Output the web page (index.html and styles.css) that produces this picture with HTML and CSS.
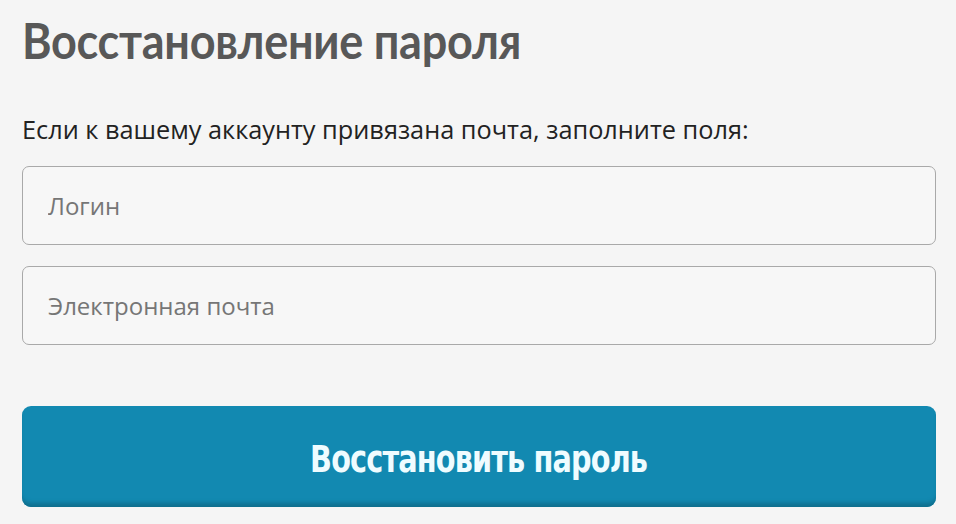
FILE: index.html
```html
<!DOCTYPE html>
<html lang="ru">
<head>
<meta charset="utf-8">
<title>Восстановление пароля</title>
<link rel="stylesheet" href="styles.css">
</head>
<body>
<main class="recover">
  <h1 class="recover__title"><span class="recover__title-text">Восстановление пароля</span></h1>
  <p class="recover__hint">Если к вашему аккаунту привязана почта, заполните поля:</p>
  <form class="recover__form">
    <input class="recover__input" type="text" placeholder="Логин">
    <input class="recover__input" type="email" placeholder="Электронная почта">
    <button class="recover__button" type="button"><span class="recover__button-text">Восстановить пароль</span></button>
  </form>
</main>
</body>
</html>
```
FILE: styles.css
```css
html, body {
  margin: 0;
  padding: 0;
  background: #f5f5f5;
}
.recover {
  width: 914px;
  padding: 0 0 0 22px;
  font-family: "Open Sans", "Noto Sans", sans-serif;
}
.recover__title {
  margin: 0;
  padding-top: 10px;
  font-family: "Lato", "Open Sans", sans-serif;
  font-size: 50px;
  line-height: 60px;
  font-weight: 700;
  color: #585858;
  letter-spacing: -0.3px;
}
.recover__title-text {
  display: inline-block;
  transform: scaleX(0.9);
  transform-origin: left center;
}
.recover__hint {
  margin: 41px 0 0;
  font-size: 25.3px;
  line-height: 36px;
  color: #222;
}
.recover__form {
  display: flex;
  flex-direction: column;
  margin-top: 19px;
}
.recover__input {
  box-sizing: border-box;
  height: 79px;
  width: 914px;
  margin: 0 0 21px;
  padding: 0 25px;
  border: 1.5px solid #a9a9a9;
  border-radius: 7px;
  background: #f7f7f7;
  font-family: "Open Sans", "Noto Sans", sans-serif;
  font-size: 24px;
  color: #444;
  outline: none;
}
.recover__input::placeholder {
  color: #767676;
}
.recover__button {
  box-sizing: border-box;
  height: 101px;
  width: 914px;
  margin-top: 40px;
  padding-top: 5px;
  border: none;
  border-radius: 9px;
  background: #1289b1;
  box-shadow: inset 0 -6px 4px -2px #0f6f8e;
  color: #effcff;
  font-family: "DejaVu Sans", sans-serif;
  font-weight: bold;
  font-stretch: condensed;
  font-size: 38px;
  letter-spacing: -1px;
  cursor: pointer;
}
.recover__button-text {
  display: inline-block;
  transform: scaleX(0.84);
}
```
